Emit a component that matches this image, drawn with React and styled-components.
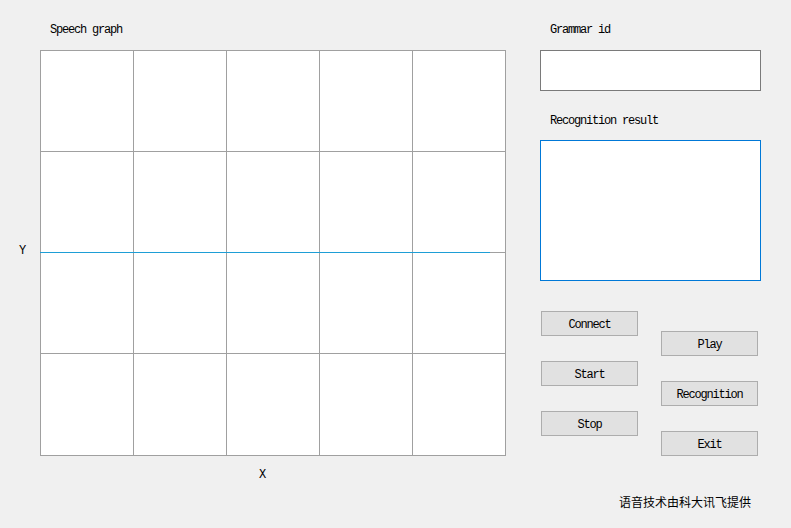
import React from "react";
import styled, { createGlobalStyle } from "styled-components";

const GlobalStyle = createGlobalStyle`
  html, body {
    margin: 0;
    padding: 0;
    background: #f0f0f0;
  }
  * {
    box-sizing: border-box;
  }
`;

const Window = styled.div`
  display: flex;
  width: 791px;
  height: 528px;
  background: #f0f0f0;
  font-family: "Liberation Mono", "Noto Sans CJK SC", monospace;
  font-size: 12px;
  letter-spacing: -1.2px;
  color: #000;
`;

const LeftPane = styled.div`
  display: flex;
  flex-direction: column;
  width: 506px;
`;

const RightPane = styled.div`
  display: flex;
  flex-direction: column;
  width: 221px;
  margin-left: 34px;
`;

const Label = styled.div`
  height: ${(p) => p.$h}px;
  padding-top: ${(p) => p.$top}px;
  padding-left: ${(p) => p.$left}px;
  line-height: 12px;
  white-space: nowrap;
`;

const GraphRow = styled.div`
  display: flex;
`;

const AxisY = styled.div`
  width: 40px;
  display: flex;
  align-items: center;
  padding-left: 19px;
  padding-bottom: 4px;
  line-height: 12px;
`;

const AxisX = styled.div`
  padding-left: 259px;
  margin-top: 13px;
  line-height: 12px;
`;

const Graph = styled.div`
  position: relative;
  display: grid;
  grid-template-columns: repeat(5, 92px);
  grid-template-rows: 100px 100px 100px 101px;
  gap: 1px;
  padding: 1px;
  background: #a0a0a0;
`;

const Cell = styled.div`
  background: #fff;
`;

const Trace = styled.svg`
  position: absolute;
  left: 0;
  top: 0;
  width: 466px;
  height: 406px;
  pointer-events: none;
`;

const Field = styled.input`
  display: block;
  width: 221px;
  height: 41px;
  margin: 0;
  border: 1px solid #7a7a7a;
  background: #fff;
  outline: none;
`;

const ResultBox = styled.textarea`
  display: block;
  width: 221px;
  height: 141px;
  margin: 0;
  border: 1px solid #0078d7;
  background: #fff;
  resize: none;
  outline: none;
`;

const ButtonArea = styled.div`
  display: flex;
  gap: 23px;
  padding-left: 1px;
  height: 175px;
`;

const ButtonColumn = styled.div`
  display: flex;
  flex-direction: column;
  gap: 25px;
  padding-top: ${(p) => p.$top}px;
`;

const Button = styled.button`
  width: 97px;
  height: 25px;
  margin: 0;
  padding: 2px 0 0;
  border: 1px solid #adadad;
  background: #e1e1e1;
  font-family: "Liberation Mono", monospace;
  font-size: 12px;
  letter-spacing: -1.2px;
  color: #000;
  line-height: 12px;
`;

const Credit = styled.div`
  padding-top: 39px;
  padding-left: 79px;
  font-family: "Noto Sans CJK SC", sans-serif;
  font-size: 12px;
  letter-spacing: 0;
  line-height: 14px;
  white-space: nowrap;
`;

export default function App() {
  const cells = Array.from({ length: 20 });
  return (
    <>
      <GlobalStyle />
      <Window>
        <LeftPane>
          <Label $h={50} $top={24} $left={50}>
            Speech graph
          </Label>
          <GraphRow>
            <AxisY>Y</AxisY>
            <Graph>
              {cells.map((_, i) => (
                <Cell key={i} />
              ))}
              <Trace viewBox="0 0 466 406">
                <line x1="0" y1="202.5" x2="450" y2="202.5" stroke="#1e9ed6" strokeWidth="1" />
              </Trace>
            </Graph>
          </GraphRow>
          <AxisX>X</AxisX>
        </LeftPane>
        <RightPane>
          <Label $h={50} $top={24} $left={10}>
            Grammar id
          </Label>
          <Field />
          <Label $h={49} $top={24} $left={10}>
            Recognition result
          </Label>
          <ResultBox />
          <ButtonArea>
            <ButtonColumn $top={30}>
              <Button>Connect</Button>
              <Button>Start</Button>
              <Button>Stop</Button>
            </ButtonColumn>
            <ButtonColumn $top={50}>
              <Button>Play</Button>
              <Button>Recognition</Button>
              <Button>Exit</Button>
            </ButtonColumn>
          </ButtonArea>
          <Credit>语音技术由科大讯飞提供</Credit>
        </RightPane>
      </Window>
    </>
  );
}
